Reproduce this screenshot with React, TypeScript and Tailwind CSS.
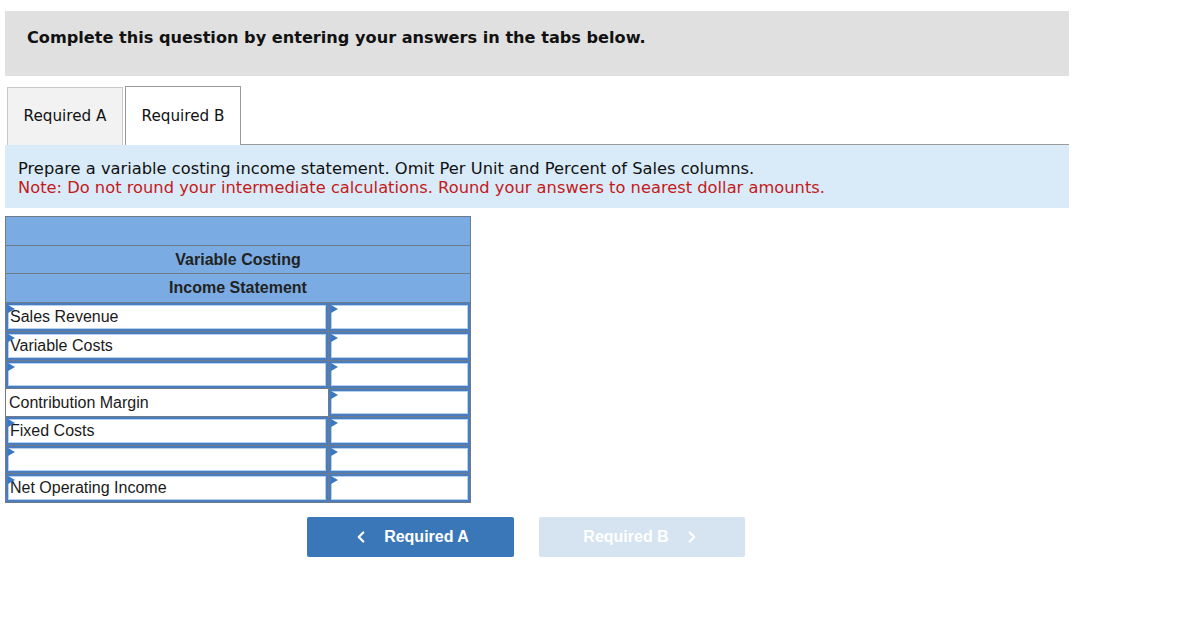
import { ChevronLeft, ChevronRight } from "lucide-react";

const rows = [
  { label: "Sales Revenue", input: true },
  { label: "Variable Costs", input: true },
  { label: "", input: true },
  { label: "Contribution Margin", input: false },
  { label: "Fixed Costs", input: true },
  { label: "", input: true },
  { label: "Net Operating Income", input: true },
];

const Marker = () => (
  <span className="absolute left-0 top-0 w-0 h-0 border-y-[4px] border-y-transparent border-l-[7px] border-l-[#3b77c2]"></span>
);

const InputCell = ({ text }: { text: string }) => (
  <div className="relative h-full border-2 border-[#4a7dc0] bg-white shadow-[inset_0_0_0_1px_#b5d1ef] flex items-center pl-[2px]">
    <Marker />
    <span>{text}</span>
  </div>
);

const App = () => {
  return (
    <div className="bg-white min-h-[621px] pt-[11px] pl-[5px] w-[1069px]">
      <div className="bg-[#e0e0e0] h-[65px] pt-[16px] pl-[22px]">
        <div className="font-['DejaVu_Sans',sans-serif] font-bold text-[16.15px] leading-[22px] text-[#111]">
          Complete this question by entering your answers in the tabs below.
        </div>
      </div>

      <div className="flex items-end mt-[10px] pl-[2px] font-['DejaVu_Sans',sans-serif] text-[15.2px] text-[#111]">
        <div className="w-[116px] h-[58px] bg-[#f2f2f2] border border-[#c8c8c8] border-b-0 flex items-center justify-center">
          Required A
        </div>
        <div className="ml-[2px] w-[116px] h-[59px] bg-white border border-[#9a9a9a] border-b-0 flex items-center justify-center">
          Required B
        </div>
        <div className="flex-1 border-b border-[#9a9a9a]"></div>
      </div>

      <div className="bg-[#d9ebf9] h-[63px] pl-[13px] pt-[14px] font-['DejaVu_Sans',sans-serif] text-[16.3px] leading-[19px]">
        <div className="text-[#111]">
          Prepare a variable costing income statement. Omit Per Unit and Percent of Sales columns.
        </div>
        <div className="text-[#c41a1a]">
          Note: Do not round your intermediate calculations. Round your answers to nearest dollar amounts.
        </div>
      </div>

      <table className="mt-[8px] w-[466px] border-collapse font-['Liberation_Sans',Arial,sans-serif] text-[16px] text-[#1a1a1a]">
        <thead>
          <tr className="h-[28.7px] bg-[#7aace3]">
            <th colSpan={2} className="border border-[#6f7b88]"></th>
          </tr>
          <tr className="h-[28.7px] bg-[#7aace3]">
            <th colSpan={2} className="border border-[#6f7b88] font-bold text-[#222]">
              Variable Costing
            </th>
          </tr>
          <tr className="h-[28.7px] bg-[#7aace3]">
            <th colSpan={2} className="border border-[#6f7b88] font-bold text-[#222]">
              Income Statement
            </th>
          </tr>
        </thead>
        <tbody>
          {rows.map((r, i) => (
            <tr key={i} className="h-[28px]">
              <td className="w-[323px] p-0 border border-[#6f7b88] h-[28px]">
                {r.input ? (
                  <InputCell text={r.label} />
                ) : (
                  <div className="h-full flex items-center pl-[3px] bg-white">{r.label}</div>
                )}
              </td>
              <td className="p-0 border border-[#6f7b88] h-[28px]">
                <InputCell text="" />
              </td>
            </tr>
          ))}
        </tbody>
      </table>

      <div className="flex mt-[14px] ml-[302px] gap-[25px] font-['Liberation_Sans',Arial,sans-serif] font-bold text-[16px] text-white">
        <div className="w-[207px] h-[40px] bg-[#3a77b9] rounded-[2px] flex items-center justify-center gap-[14px]">
          <ChevronLeft size={18} strokeWidth={3} />
          <span>Required A</span>
        </div>
        <div className="w-[206px] h-[40px] bg-[#d6e3f1] rounded-[2px] flex items-center justify-center gap-[14px]">
          <span>Required B</span>
          <ChevronRight size={18} strokeWidth={3} />
        </div>
      </div>
    </div>
  );
};

export default App;
